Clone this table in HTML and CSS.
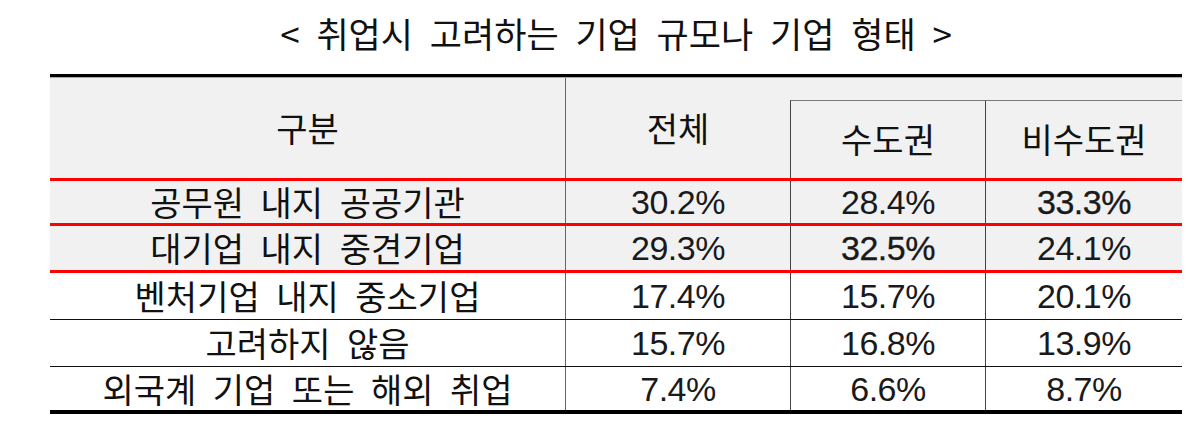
FILE: index.html
```html
<!DOCTYPE html>
<html lang="ko">
<head>
<meta charset="utf-8">
<title>취업시 고려하는 기업 규모나 기업 형태</title>
<link rel="stylesheet" href="styles.css">
</head>
<body>
<div class="page">
  <h1 class="title">&lt; 취업시 고려하는 기업 규모나 기업 형태 &gt;</h1>
  <div class="table">
    <div class="head">
      <div class="hcell c1">구분</div>
      <div class="hcell c2">전체</div>
      <div class="hcell c3">수도권</div>
      <div class="hcell c4">비수도권</div>
    </div>
    <div class="row gray red r1">
      <div class="cell label">공무원 내지 공공기관</div>
      <div class="cell num">30.2%</div>
      <div class="cell num">28.4%</div>
      <div class="cell num strong">33.3%</div>
    </div>
    <div class="row gray red r2">
      <div class="cell label">대기업 내지 중견기업</div>
      <div class="cell num">29.3%</div>
      <div class="cell num strong">32.5%</div>
      <div class="cell num">24.1%</div>
    </div>
    <div class="row thin r3">
      <div class="cell label">벤처기업 내지 중소기업</div>
      <div class="cell num">17.4%</div>
      <div class="cell num">15.7%</div>
      <div class="cell num">20.1%</div>
    </div>
    <div class="row thin r4">
      <div class="cell label">고려하지 않음</div>
      <div class="cell num">15.7%</div>
      <div class="cell num">16.8%</div>
      <div class="cell num">13.9%</div>
    </div>
    <div class="row r5">
      <div class="cell label">외국계 기업 또는 해외 취업</div>
      <div class="cell num">7.4%</div>
      <div class="cell num">6.6%</div>
      <div class="cell num">8.7%</div>
    </div>
  </div>
</div>
</body>
</html>
```

FILE: styles.css
```css
html, body {
  margin: 0;
  padding: 0;
  background: #ffffff;
}

body {
  font-family: "Noto Sans CJK KR", "Noto Sans", sans-serif;
  color: #111111;
}

.page {
  width: 1132px;
  margin-left: 50px;
}

.title {
  margin: 0;
  height: 74px;
  box-sizing: border-box;
  padding-top: 9px;
  font-size: 35px;
  font-weight: 400;
  line-height: 48px;
  text-align: center;
  word-spacing: 7px;
  color: #111111;
}

.table {
  border-top: 3px solid #000000;
  border-bottom: 4px solid #000000;
}

.head {
  display: grid;
  grid-template-columns: 515px 225px 195px 197px;
  grid-template-rows: 22px 78px;
  height: 104px;
  box-sizing: border-box;
  border-top: 1px solid #a8a8a8;
  border-bottom: 3px solid #ff0000;
  background: #f1f1f1;
}

.hcell {
  display: flex;
  align-items: center;
  justify-content: center;
  font-size: 34px;
  line-height: 1;
  box-sizing: border-box;
}

.hcell.c1 {
  grid-column: 1;
  grid-row: 1 / 3;
}

.hcell.c2 {
  grid-column: 2;
  grid-row: 1 / 3;
  border-left: 1px solid #666666;
}

.hcell.c3 {
  grid-column: 3;
  grid-row: 2;
  border-top: 1px solid #7a7a7a;
  border-left: 1px solid #444444;
  padding-bottom: 2px;
}

.hcell.c4 {
  grid-column: 4;
  grid-row: 2;
  border-top: 1px solid #7a7a7a;
  border-left: 1px solid #444444;
  padding-bottom: 2px;
}

.row {
  display: grid;
  grid-template-columns: 515px 225px 195px 197px;
  box-sizing: border-box;
}

.row.gray {
  background: #f1f1f1;
}

.row.red {
  border-bottom: 3px solid #ff0000;
}

.row.thin {
  border-bottom: 1px solid #111111;
}

.r1 { height: 45px; }
.r2 { height: 47px; }
.r3 { height: 47px; }
.r4 { height: 47px; }
.r5 { height: 43px; }

.cell {
  display: flex;
  align-items: center;
  justify-content: center;
  box-sizing: border-box;
  line-height: 1;
}

.cell + .cell {
  border-left: 1px solid #444444;
}

.cell:nth-child(2) {
  border-left-color: #666666;
}

.label {
  font-size: 34px;
  word-spacing: 7px;
}

.num {
  font-family: "Liberation Sans", Arial, sans-serif;
  font-size: 34px;
  letter-spacing: -0.5px;
  color: #1a1a1a;
}

.strong {
  -webkit-text-stroke: 0.35px #1a1a1a;
}
```
